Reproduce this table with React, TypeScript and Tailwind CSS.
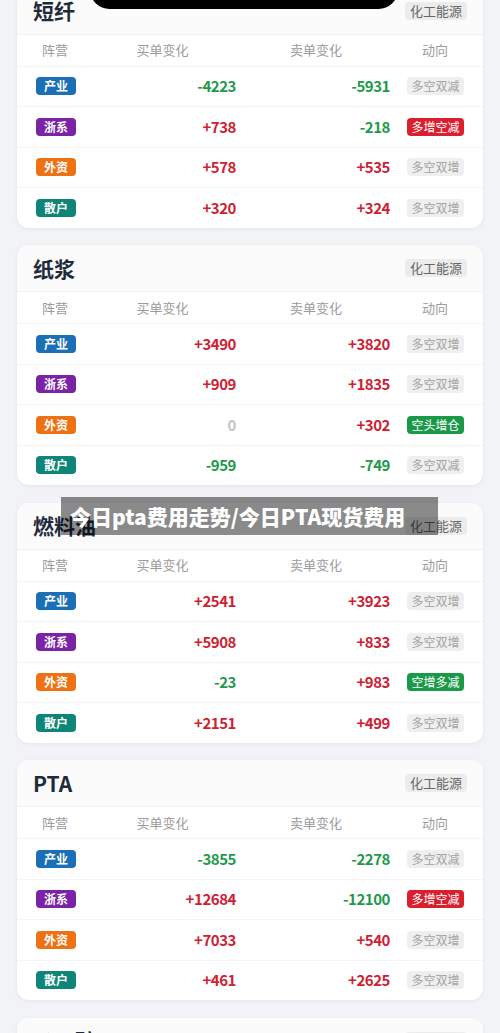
import React from "react";

type Camp = "产业" | "浙系" | "外资" | "散户";
type Tone = "gray" | "red" | "green";

interface Row {
  camp: Camp;
  buy: string;
  sell: string;
  trend: string;
  tone: Tone;
}

interface Board {
  name: string;
  rows: Row[];
}

const campColor: Record<Camp, string> = {
  产业: "bg-[#1b6fb5]",
  浙系: "bg-[#7a23a6]",
  外资: "bg-[#ee7214]",
  散户: "bg-[#0f8577]",
};

const toneClass: Record<Tone, string> = {
  gray: "bg-[#efefef] text-[#a3a3a3]",
  red: "bg-[#dc1f2e] text-white",
  green: "bg-[#1a9a48] text-white",
};

const boards: Board[] = [
  {
    name: "短纤",
    rows: [
      { camp: "产业", buy: "-4223", sell: "-5931", trend: "多空双减", tone: "gray" },
      { camp: "浙系", buy: "+738", sell: "-218", trend: "多增空减", tone: "red" },
      { camp: "外资", buy: "+578", sell: "+535", trend: "多空双增", tone: "gray" },
      { camp: "散户", buy: "+320", sell: "+324", trend: "多空双增", tone: "gray" },
    ],
  },
  {
    name: "纸浆",
    rows: [
      { camp: "产业", buy: "+3490", sell: "+3820", trend: "多空双增", tone: "gray" },
      { camp: "浙系", buy: "+909", sell: "+1835", trend: "多空双增", tone: "gray" },
      { camp: "外资", buy: "0", sell: "+302", trend: "空头增仓", tone: "green" },
      { camp: "散户", buy: "-959", sell: "-749", trend: "多空双减", tone: "gray" },
    ],
  },
  {
    name: "燃料油",
    rows: [
      { camp: "产业", buy: "+2541", sell: "+3923", trend: "多空双增", tone: "gray" },
      { camp: "浙系", buy: "+5908", sell: "+833", trend: "多空双增", tone: "gray" },
      { camp: "外资", buy: "-23", sell: "+983", trend: "空增多减", tone: "green" },
      { camp: "散户", buy: "+2151", sell: "+499", trend: "多空双增", tone: "gray" },
    ],
  },
  {
    name: "PTA",
    rows: [
      { camp: "产业", buy: "-3855", sell: "-2278", trend: "多空双减", tone: "gray" },
      { camp: "浙系", buy: "+12684", sell: "-12100", trend: "多增空减", tone: "red" },
      { camp: "外资", buy: "+7033", sell: "+540", trend: "多空双增", tone: "gray" },
      { camp: "散户", buy: "+461", sell: "+2625", trend: "多空双增", tone: "gray" },
    ],
  },
  {
    name: "乙二醇",
    rows: [
      { camp: "产业", buy: "+1120", sell: "+980", trend: "多空双增", tone: "gray" },
    ],
  },
];

function numColor(v: string) {
  if (v.startsWith("+")) return "text-[#cc2233]";
  if (v.startsWith("-")) return "text-[#1f9a4b]";
  return "text-[#c4c4c4]";
}

function Card({ board }: { board: Board }) {
  return (
    <div className="mx-[17px] overflow-hidden rounded-[12px] bg-white shadow-[0_1px_4px_rgba(0,0,0,0.06)]">
      <div className="flex h-[47px] items-center justify-between border-b border-[#f0f1f3] bg-[#fbfbfc] pl-4 pr-4">
        <span className="text-[21px] font-bold leading-none text-[#1f2b3a]">{board.name}</span>
        <span className="rounded-[4px] bg-[#ececec] px-[5px] text-[13px] leading-[18px] text-[#666]">化工能源</span>
      </div>
      <div className="grid h-[31px] grid-cols-[76px_143px_154px_1fr] items-center text-[13px] text-[#9b9b9b]">
        <span className="text-center">阵营</span>
        <span className="pr-[4px] text-center">买单变化</span>
        <span className="pl-[6px] text-center">卖单变化</span>
        <span className="pr-[3px] text-center">动向</span>
      </div>
      {board.rows.map((r) => (
        <div
          key={r.camp}
          className="grid h-[40.5px] grid-cols-[76px_143px_154px_1fr] items-center border-t border-[#f3f4f6]"
        >
          <div className="flex justify-center pl-[2px]">
            <span className={`${campColor[r.camp]} rounded-[4px] px-[8px] text-[12px] font-bold leading-[18px] text-white`}>
              {r.camp}
            </span>
          </div>
          <span className={`text-right text-[15px] font-semibold tracking-[-0.03em] ${numColor(r.buy)}`}>{r.buy}</span>
          <span className={`text-right text-[15px] font-semibold tracking-[-0.03em] ${numColor(r.sell)}`}>{r.sell}</span>
          <div className="flex justify-center pr-[2px]">
            <span className={`${toneClass[r.tone]} rounded-[4px] px-[4px] text-[12px] leading-[18px]`}>{r.trend}</span>
          </div>
        </div>
      ))}
    </div>
  );
}

export default function App() {
  return (
    <div
      className="relative h-[1033px] overflow-hidden bg-[#f2f3f7]"
      style={{ fontFamily: '"Noto Sans CJK SC", "Noto Sans", sans-serif' }}
    >
      <div className="-mt-[12.5px] flex flex-col gap-[17.5px]">
        {boards.map((b) => (
          <Card key={b.name} board={b} />
        ))}
      </div>

      {/* notch */}
      <div className="absolute left-[90px] top-[-30px] h-[39px] w-[308px] rounded-[20px] bg-black" />

      {/* caption overlay */}
      <div className="absolute left-[61px] top-[497px] flex h-[38px] w-[377px] items-center bg-[rgba(0,0,0,0.45)] pl-[9px]">
        <span className="text-[21px] font-extrabold leading-none text-white">今日pta费用走势/今日PTA现货费用</span>
      </div>
    </div>
  );
}
